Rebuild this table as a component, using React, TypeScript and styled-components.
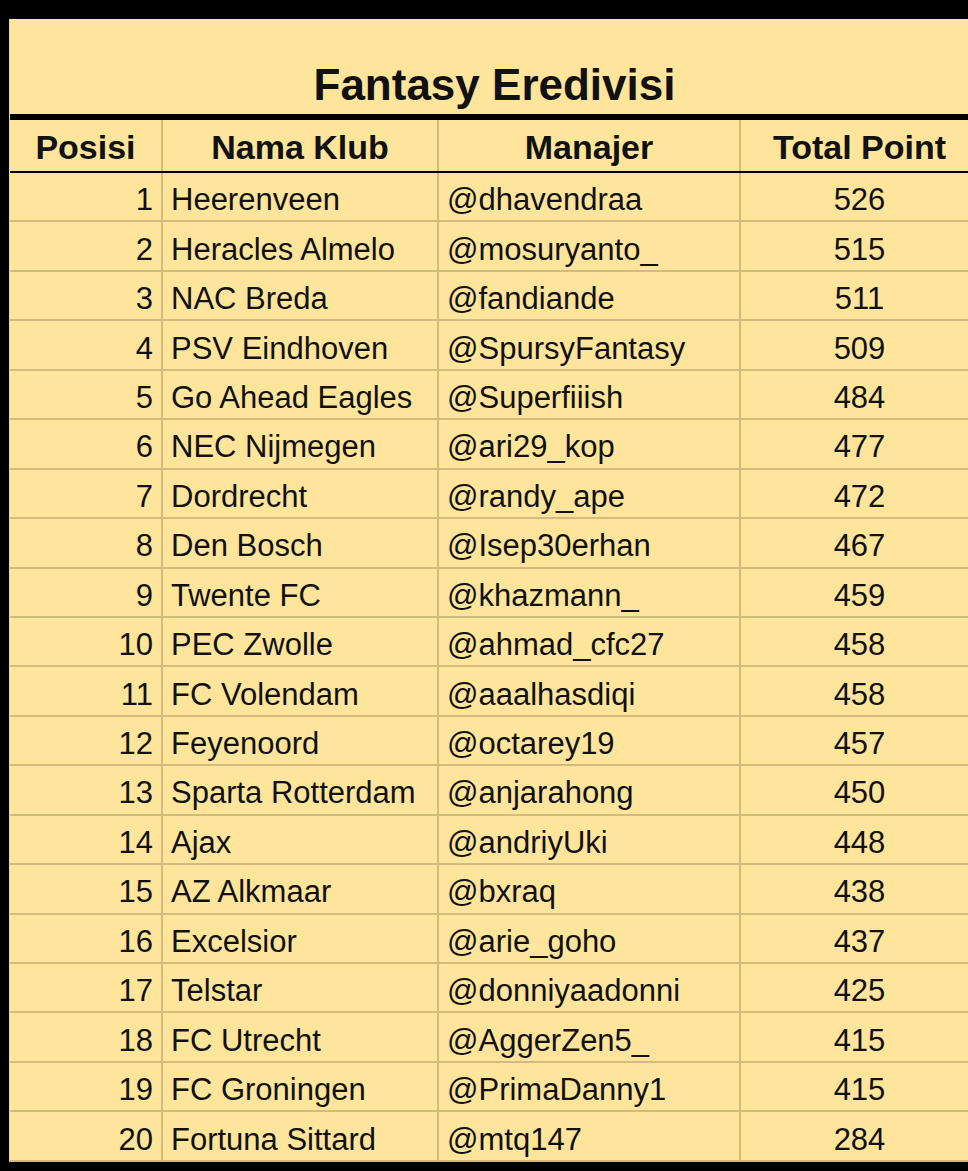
import React from 'react';
import styled, { createGlobalStyle } from 'styled-components';

const GlobalStyle = createGlobalStyle`
    html, body {
        margin: 0;
        padding: 0;
        background: #000;
        overflow: hidden;
    }
`;

interface IRow {
    club: string;
    manager: string;
    point: number;
}

const rows: IRow[] = [
    { club: 'Heerenveen', manager: '@dhavendraa', point: 526 },
    { club: 'Heracles Almelo', manager: '@mosuryanto_', point: 515 },
    { club: 'NAC Breda', manager: '@fandiande', point: 511 },
    { club: 'PSV Eindhoven', manager: '@SpursyFantasy', point: 509 },
    { club: 'Go Ahead Eagles', manager: '@Superfiiish', point: 484 },
    { club: 'NEC Nijmegen', manager: '@ari29_kop', point: 477 },
    { club: 'Dordrecht', manager: '@randy_ape', point: 472 },
    { club: 'Den Bosch', manager: '@Isep30erhan', point: 467 },
    { club: 'Twente FC', manager: '@khazmann_', point: 459 },
    { club: 'PEC Zwolle', manager: '@ahmad_cfc27', point: 458 },
    { club: 'FC Volendam', manager: '@aaalhasdiqi', point: 458 },
    { club: 'Feyenoord', manager: '@octarey19', point: 457 },
    { club: 'Sparta Rotterdam', manager: '@anjarahong', point: 450 },
    { club: 'Ajax', manager: '@andriyUki', point: 448 },
    { club: 'AZ Alkmaar', manager: '@bxraq', point: 438 },
    { club: 'Excelsior', manager: '@arie_goho', point: 437 },
    { club: 'Telstar', manager: '@donniyaadonni', point: 425 },
    { club: 'FC Utrecht', manager: '@AggerZen5_', point: 415 },
    { club: 'FC Groningen', manager: '@PrimaDanny1', point: 415 },
    { club: 'Fortuna Sittard', manager: '@mtq147', point: 284 },
];

const App: React.FC = () => {
    return (
        <>
            <GlobalStyle />
            <Page>
                <Sheet>
                    <Title>Fantasy Eredivisi</Title>
                    <HeadRow>
                        <Th>Posisi</Th>
                        <Th>Nama Klub</Th>
                        <Th>Manajer</Th>
                        <Th>Total Point</Th>
                    </HeadRow>
                    {
                        rows.map((row, i) =>
                            <Row key={i}>
                                <Td align="right">{i + 1}</Td>
                                <Td align="left">{row.club}</Td>
                                <Td align="left">{row.manager}</Td>
                                <Td align="center">{row.point}</Td>
                            </Row>
                        )
                    }
                </Sheet>
            </Page>
        </>
    );
};

const Page = styled.div`
    padding: 19px 0 0 9px;
    width: 980px;
`;
const Sheet = styled.div`
    width: 969px;
    background: #d2bb7c;
    border-left: 1px solid #e9d596;
    font-family: "Liberation Sans", Arial, sans-serif;
    color: #111;
`;
const Title = styled.div`
    box-sizing: border-box;
    height: 101px;
    padding-top: 41px;
    background: #fee59b;
    border-bottom: 6px solid #000;
    text-align: center;
    font-size: 44px;
    font-weight: bold;
    line-height: 50px;
`;
const HeadRow = styled.div`
    display: grid;
    grid-template-columns: 151px 274px 300px 237px;
    column-gap: 2px;
    border-bottom: 2px solid #000;
`;
const Row = styled.div`
    display: grid;
    grid-template-columns: 151px 274px 300px 237px;
    column-gap: 2px;
    border-bottom: 2px solid #d2bb7c;
`;
const Th = styled.div`
    box-sizing: border-box;
    height: 51px;
    padding-top: 2px;
    background: #fee59b;
    text-align: center;
    font-size: 34px;
    font-weight: bold;
    line-height: 51px;
`;
const Td = styled.div<{ align: 'left' | 'right' | 'center' }>`
    box-sizing: border-box;
    height: 47.45px;
    padding: 7px 8px 0;
    background: #fee59b;
    display: flex;
    align-items: center;
    justify-content: ${p => p.align === 'right' ? 'flex-end' : p.align === 'center' ? 'center' : 'flex-start'};
    font-size: 31px;
    white-space: nowrap;
`;

export default App;
